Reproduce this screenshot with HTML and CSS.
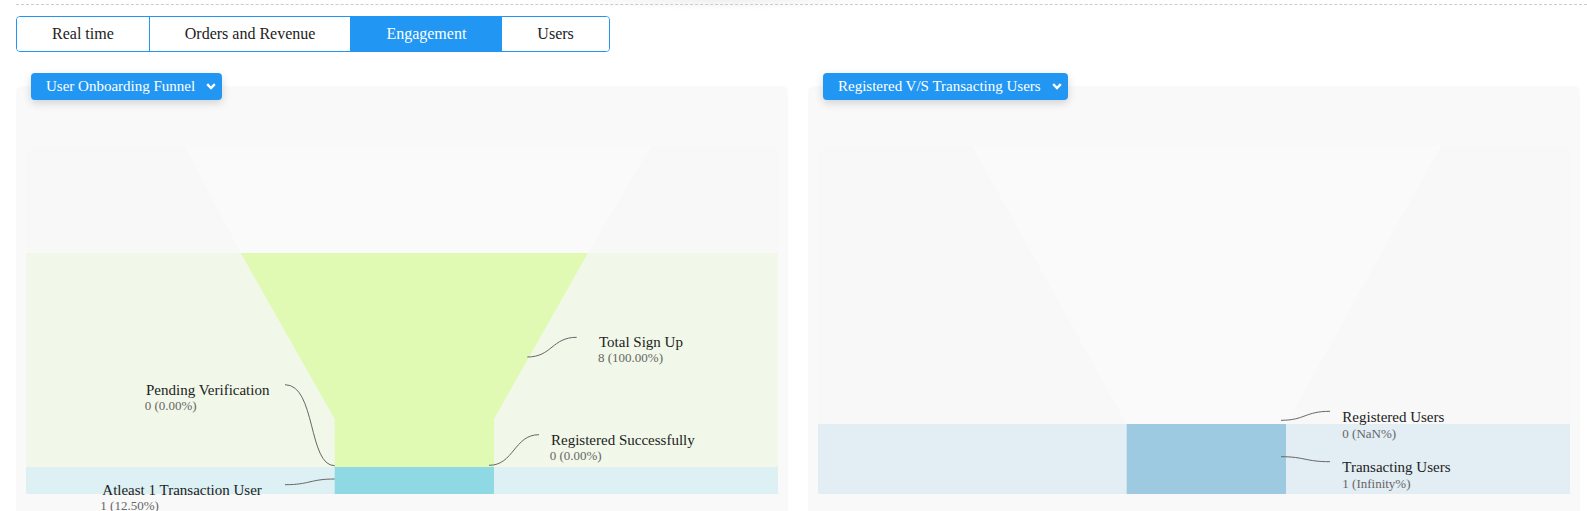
FILE: index.html
```html
<!DOCTYPE html>
<html lang="en">
<head>
    <meta charset="UTF-8">
    <meta name="viewport" content="width=device-width, initial-scale=1.0">
    <title>Engagement</title>
    <link rel="stylesheet" href="styles.css">
</head>
<body>
    <div class="topline"></div>

    <nav class="tabs">
        <button class="tab">Real time</button>
        <button class="tab">Orders and Revenue</button>
        <button class="tab active">Engagement</button>
        <button class="tab">Users</button>
    </nav>

    <main class="charts">
        <section class="chart-card">
            <button class="dropdown">
                User Onboarding Funnel
                <svg class="chevron" viewBox="0 0 10 7"><path d="M1.2 1.2 5 5 8.8 1.2"/></svg>
            </button>
            <div class="panel">
                <svg class="funnel" viewBox="0 0 772 440">
                    <rect class="band-ghost" x="10" y="60" width="752" height="107"/>
                    <polygon class="stage-ghost" points="169,60 635,60 572,167 224.7,167"/>

                    <rect x="10" y="167" width="752" height="214" fill="#f1f8e9"/>
                    <polygon points="224.7,167 572,167 478,333 478,381 318.7,381 318.7,333" fill="#e0fab4"/>

                    <rect x="10" y="381" width="752" height="27" fill="#ddf0f3"/>
                    <rect x="318.7" y="381" width="159.3" height="27" fill="#8ed9e3"/>

                    <path class="link" d="M511.3 271 C536 271 536 251.3 560.7 251.3"/>
                    <text class="name" x="583" y="261.3">Total Sign Up</text>
                    <text class="value" x="582" y="276.3">8 (100.00%)</text>

                    <path class="link" d="M269 298.7 C300 298.7 292 379.7 318.7 379.7"/>
                    <text class="name" x="130" y="309">Pending Verification</text>
                    <text class="value" x="128.7" y="323.7">0 (0.00%)</text>

                    <path class="link" d="M473 379.3 C498 379.3 498 348.7 523 348.7"/>
                    <text class="name" x="535" y="358.7">Registered Successfully</text>
                    <text class="value" x="533.7" y="374">0 (0.00%)</text>

                    <path class="link" d="M269 398.7 C294 398.7 294 393 318.7 393"/>
                    <text class="name" x="86.3" y="408.7">Atleast 1 Transaction User</text>
                    <text class="value" x="84.3" y="423.7">1 (12.50%)</text>
                </svg>
            </div>
        </section>

        <section class="chart-card">
            <button class="dropdown">
                Registered V/S Transacting Users
                <svg class="chevron" viewBox="0 0 10 7"><path d="M1.2 1.2 5 5 8.8 1.2"/></svg>
            </button>
            <div class="panel">
                <svg class="funnel" viewBox="0 0 772 440">
                    <rect class="band-ghost" x="10" y="60" width="752" height="278"/>
                    <polygon class="stage-ghost" points="164,60 633,60 478,338 318.7,338"/>

                    <rect x="10" y="338" width="752" height="70" fill="#e2edf4"/>
                    <rect x="318.7" y="338" width="159.3" height="70" fill="#9ecae1"/>

                    <path class="link" d="M473 334.3 C497 334.3 497 325.3 522 325.3"/>
                    <text class="name" x="534.3" y="335.7">Registered Users</text>
                    <text class="value" x="534.3" y="352.3">0 (NaN%)</text>

                    <path class="link" d="M473 370.7 C497 370.7 497 375.7 522 375.7"/>
                    <text class="name" x="534.3" y="385.7">Transacting Users</text>
                    <text class="value" x="534.3" y="402">1 (Infinity%)</text>
                </svg>
            </div>
        </section>
    </main>
</body>
</html>
```

FILE: styles.css
```css
body {
    margin: 0;
    font-family: "Liberation Serif", serif;
    background: #ffffff radial-gradient(ellipse 170px 10px at 720px 0, rgba(0, 0, 0, 0.06), rgba(0, 0, 0, 0)) no-repeat;
}
.topline {
    margin-left: 16px;
    height: 4px;
    border-bottom: 1px dashed #cccccc;
}
.tabs {
    display: flex;
    width: max-content;
    margin: 11px 0 0 16px;
    border: 1px solid #2196f3;
    border-radius: 4px;
    overflow: hidden;
}
.tab {
    height: 34px;
    padding: 0 35px;
    border: none;
    border-left: 1px solid #2196f3;
    background: #ffffff;
    color: #222222;
    font-family: "Liberation Serif", serif;
    font-size: 16px;
    cursor: pointer;
}
.tab:first-child {
    border-left: none;
}
.tab.active {
    background: #2196f3;
    color: #ffffff;
}
.charts {
    display: flex;
    gap: 20px;
    padding: 21px 0 0 16px;
}
.chart-card {
    width: 772px;
}
.dropdown {
    position: relative;
    z-index: 1;
    display: flex;
    align-items: center;
    gap: 11px;
    height: 27px;
    margin: 0 0 -14px 15px;
    padding: 0 6px 0 15px;
    border: none;
    border-radius: 4px;
    background: #2196f3;
    color: #ffffff;
    font-family: "Liberation Serif", serif;
    font-size: 15px;
    box-shadow: 0 3px 8px rgba(0, 0, 0, 0.16);
    cursor: pointer;
}
.chevron {
    width: 10px;
    height: 7px;
    fill: none;
    stroke: #ffffff;
    stroke-width: 2.4;
}
.panel {
    height: 440px;
    background: #f9f9f9;
    border-radius: 6px;
    overflow: hidden;
}
.funnel {
    display: block;
    width: 772px;
    height: 440px;
    font-family: "Liberation Serif", serif;
}
.band-ghost {
    fill: #f8f8f8;
}
.stage-ghost {
    fill: #fafafa;
}
.link {
    fill: none;
    stroke: #666666;
    stroke-width: 1;
}
.name {
    font-size: 15px;
    fill: #222222;
}
.value {
    font-size: 13px;
    fill: #666666;
}
```
